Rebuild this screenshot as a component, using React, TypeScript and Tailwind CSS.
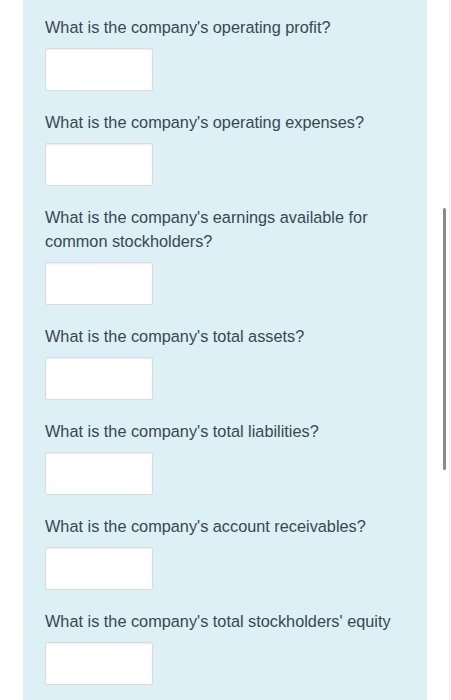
import React from 'react';

const questions: string[][] = [
  ["What is the company's operating profit?"],
  ["What is the company's operating expenses?"],
  ["What is the company's earnings available for", 'common stockholders?'],
  ["What is the company's total assets?"],
  ["What is the company's total liabilities?"],
  ["What is the company's account receivables?"],
  ["What is the company's total stockholders' equity"],
];

const App: React.FC = () => {
  return (
    <div className="relative h-[700px] w-[451px] overflow-hidden bg-white font-['Liberation_Sans',Arial,sans-serif]">
      {/* question panel */}
      <div className="ml-[23px] h-full w-[404px] bg-[#dcf0f6] px-[22px] pt-[15px]">
        <div className="flex flex-col gap-[19px]">
          {questions.map((lines, i) => (
            <div key={i} className="flex flex-col gap-[9px]">
              <p className="text-[16.3px] leading-[24px] text-[#3a474f]">
                {lines.map((l, j) => (
                  <span key={j} className="block">
                    {l}
                  </span>
                ))}
              </p>
              <input
                type="text"
                className="h-[43px] w-[108px] rounded-[2px] border border-[#d9dcdd] bg-white shadow-[inset_0_1px_2px_rgba(0,0,0,0.08)] outline-none"
              />
            </div>
          ))}
        </div>
      </div>

      {/* scrollbar overlay */}
      <div className="absolute left-[443px] top-[208px] h-[262px] w-[3px] rounded-full bg-[#8a8a8a]" />
      <div className="absolute right-[1px] top-0 h-full w-px bg-[#ececec]" />
    </div>
  );
};

export default App;
